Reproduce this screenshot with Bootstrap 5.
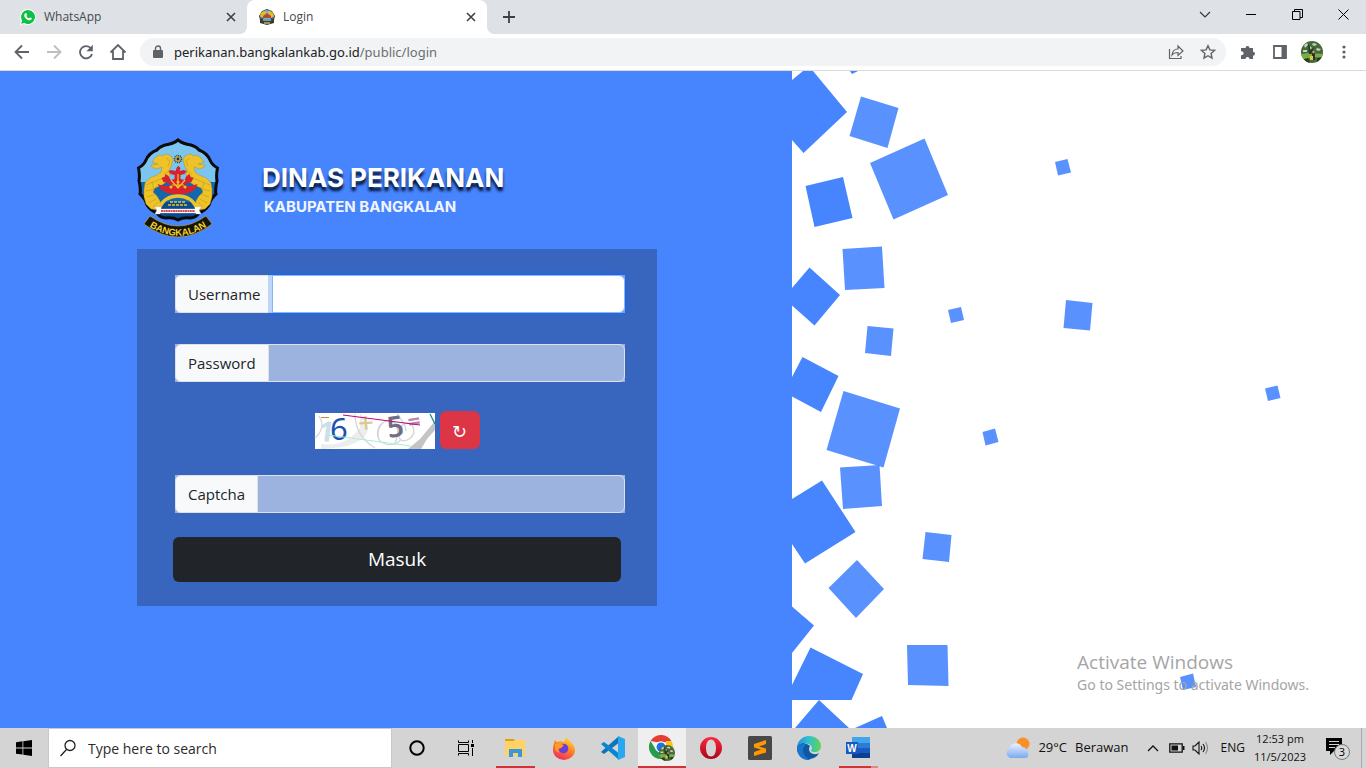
<!DOCTYPE html>
<html lang="id">
<head>
<meta charset="utf-8">
<meta name="viewport" content="width=device-width, initial-scale=1">
<title>Login</title>
<link href="https://cdn.jsdelivr.net/npm/bootstrap@5.3.0/dist/css/bootstrap.min.css" rel="stylesheet">
<style>
  :root { --sea: #4785ff; --strip: #dee1e6; --ink: #5f6368; }
  body { font-family: "Open Sans", "Noto Sans", sans-serif; font-size: 15px; }
  button { color: inherit; }
  .plain { border: 0; background: none; padding: 0; display: flex; align-items: center; justify-content: center; flex: none; }

  /* browser frame */
  .tab-strip { height: 34px; background: var(--strip); font-size: 12px; color: #45494d; }
  .tab-item { width: 240px; padding: 0 8px 0 12px; gap: 8px; color: inherit; }
  .tab-idle { width: 247px; padding-left: 20px; }
  .tab-open { background: #fff; border-radius: 8px 8px 0 0; position: relative; }
  .tab-open::before, .tab-open::after { content: ""; position: absolute; bottom: 0; width: 8px; height: 8px; }
  .tab-open::before { left: -8px; background: radial-gradient(circle at 0 0, transparent 8px, #fff 8px); }
  .tab-open::after { right: -8px; background: radial-gradient(circle at 100% 0, transparent 8px, #fff 8px); }
  .tab-x { width: 16px; height: 16px; }
  .tab-new { width: 28px; }
  .win-btn { width: 46px; height: 29px; }
  .tool-bar { height: 37px; background: #fff; border-bottom: 1px solid #dadada; padding: 0 6px; color: var(--ink); }
  .tool-btn { width: 32px; height: 32px; }
  .address { height: 28px; border-radius: 14px; background: #f1f3f4; margin: 0 6px; padding: 0 2px 0 12px; font: 13px/20px "Noto Sans", sans-serif; }
  .address a { margin-left: 10px; color: #202124; text-decoration: none; }
  .address a span { color: #6b6f74; }

  /* login page */
  .login-side { width: 58%; background: var(--sea); padding: 67px 135px 0 137px; }
  .brand { gap: 43px; height: 111px; }
  .brand-name { font: 700 26px/32px Inter, sans-serif; text-shadow: 0 4px 3px #00102f; margin: 0; }
  .brand-area { font: 700 15px/20px Inter, sans-serif; margin: 3px 0 0 2px; color: #f1f5ff; }
  .login-box { background: #3865be; padding: 26px 36px 24px; }
  .field { background: rgba(255,255,255,.5); width: auto; margin: 0 -4px 0 2px; --bs-border-radius: 6px; }
  .field .input-group-text, .field .form-control { font-size: 15px; height: 38px; border-color: #dee2e6; }
  .field .input-group-text { background: #f8f9fa; color: #212529; }
  .field .form-control { background: transparent; }
  .field .form-control.active-field { background: #fff; border-color: #86b7fe; box-shadow: 0 0 0 4px rgba(13,110,253,.25); z-index: 5; }
  .field-gap { margin-bottom: 31px; }
  .captcha-row { gap: 5px; margin: 29px 0 26px; }
  .captcha-row svg { overflow: visible; }
  .reload { width: 40px; height: 38px; padding: 4px 0 0; font: 18px/20px "DejaVu Sans", sans-serif; }
  .enter { height: 45px; font-size: 19px; background: #212529; color: #fff; border-radius: 6px; padding: 0; }
  .watermark { position: absolute; right: 57px; bottom: 33px; color: #a5a5a5; white-space: nowrap; }
  .watermark .big { font-size: 19px; line-height: 26px; }
  .watermark .tiny { font: 14px/20px "Noto Sans", sans-serif; }

  /* taskbar */
  .task-bar { height: 40px; background: #d4d4d4; color: #111; font-size: 13px; }
  .start-btn { width: 48px; height: 40px; }
  .search-box { width: 344px; background: #fff; border: 1px solid #c8c8c8; padding: 0 10px; gap: 11px; margin-right: 1px; }
  .search-box input { border: 0; outline: 0; background: none; padding: 0; min-width: 0; flex: 1; font-size: 14px; }
  .search-box input::placeholder { color: #2b2b2b; opacity: 1; }
  .task-btn { width: 48px; height: 40px; margin-right: 1px; position: relative; }
  .task-btn.running::after { content: ""; position: absolute; left: 5px; right: 4px; bottom: 0; height: 2px; background: #d13438; }
  .task-btn.current { background: #efefef; }
  .task-btn.current::after { left: 0; right: 0; }
  .task-btn.stacked::after { background: linear-gradient(90deg, #d13438 32px, #de8a8c 32px); }
  .tray-btn { width: 24px; height: 40px; }
  .lang { font-size: 12px; }
  .clock { width: 70px; font-size: 11px; line-height: 18px; }
  .note-btn { width: 46px; height: 40px; }
  .desk-edge { width: 5px; height: 40px; padding: 0; border: 0; border-left: 1px solid #a8a8a8; background: none; }
</style>
</head>
<body class="d-flex flex-column vh-100 overflow-hidden">

<svg width="0" height="0" class="position-absolute" aria-hidden="true">
  <defs>
    <path id="shield-line" d="M41 2Q46 6 54 7Q60 9 62 12Q70 15 73 22Q75 27 80.500 30Q79 37 80 43Q78 51 79 56Q74 60 72 67Q68 73 62 75Q59 80 53 80Q46 79 41 82Q36 79 29 80Q23 80 20 75Q14 73 10 67Q8 60 3 56Q4 51 2 43Q3 37 1.500 30Q7 27 9 22Q12 15 20 12Q22 9 28 7Q36 6 41 2Z"/>
    <clipPath id="shield"><use href="#shield-line"/></clipPath>
    <clipPath id="disc"><circle cx="11" cy="11" r="11"/></clipPath>
    <symbol id="emblem" viewBox="0 0 82 102">
      <g clip-path="url(#shield)">
        <path fill="#7cc5ee" d="M0 0h82v44H0z"/><path fill="#1268ac" d="M0 44h82v20H0z"/><path fill="#0a4c8b" d="M0 64h82v26H0z"/>
      </g>
      <use href="#shield-line" fill="none" stroke="#0b0b0b" stroke-width="3"/>
      <g id="beast" fill="#eec229" stroke="#a98512" stroke-width=".4">
        <path d="M19 19l4-2 2 1 4-2 5 2 2 4-2 7-2 3 1 5-2 6-6 4-7 3-2 4 4 4 3 5 1 6-3 3-7-1-5-5-2-7 0-8 1-6 5-5 7-3 4-3 1-5-6 2-4-2-1-2 7-1-6-2z"/>
        <path d="M9 47l10-4 7-3M9 53l9-2M10 59l9-3M12 65l7-4M16 69l5-5M29 20l4 3-2 5M27 36l6-3M25 40l6-2M15 44l2 8" fill="none"/>
      </g>
      <use href="#beast" transform="matrix(-1 0 0 1 82 0)"/>
      <circle cx="41" cy="21" r="3.500" fill="#cfb13c" stroke="#24476e" stroke-width="1.600" stroke-dasharray="1 .8"/><circle cx="41" cy="21" r="1.400" fill="#15345c"/>
      <path fill="#d7212e" d="M40 29l1.500-1 2 2-1 3 4-1 3 1-2 3-4 1v4l4 1 2-4 3-2 1 3 3 1-2 4-4 1-3 3h7l6-2-2 5-6 4-7 1h-9l-7-1-6-4-3-5 6 2h8l-4-3-4-1-2-4 3-1 1-3 3 2 2 4 4-1v-4l-4-1-2-3 3-1 4 1z"/>
      <path d="M41 36v14M34 42l7 8 7-8M35 47h12" fill="none" stroke="#eec229" stroke-width="1.200"/><circle cx="34" cy="49" r="1.600" fill="#eec229"/><circle cx="48" cy="49" r="1.600" fill="#eec229"/><circle cx="41" cy="44" r="1.600" fill="#eec229"/>
      <path d="M22 70Q28 58 41 58T60 70" fill="none" stroke="#eec229" stroke-width="3.500"/>
      <path d="M33 64h16M31 67h20" stroke="#eec229" stroke-width="1.300" stroke-dasharray="3 1"/>
      <path fill="#fff" stroke="#c6d1dc" stroke-width=".4" d="M18 69h6v2h34v-2h6l-2 3 2 4h-5v-1H23v1h-5l2-4z"/>
      <path d="M24 73h34" stroke="#df4b53" stroke-width="1.800" stroke-dasharray="2 .4"/>
      <path d="M13 78Q41 98 69 78L75 86Q41 112 7 86Z" fill="#17150b" stroke="#c7a72a" stroke-width=".6"/>
      <path id="ribbon" d="M9 86.500Q41 109 73 86.500" fill="none"/>
      <text font-family="Liberation Sans, sans-serif" font-weight="700" font-size="9.500" fill="#f1d12f" text-anchor="middle"><textPath href="#ribbon" startOffset="50%">BANGKALAN</textPath></text>
    </symbol>
    <symbol id="park" viewBox="0 0 22 22">
      <g clip-path="url(#disc)"><path fill="#47693a" d="M0 0h22v22H0z"/><path fill="#c3d4bd" d="M3 4l3-2 1 2-3 3zM12 2l4 1-2 2-3-1zM16 7l4 1-2 2-3-1zM2 9h4v2H2zM9 5l2 2-2 2z"/><path fill="#7cab48" d="M0 13l8-1 14 1v4l-9-1-13 3z"/><path fill="#263c20" d="M7 3l1.500 1 1 5 4-3-2 4-1 3H8l-.5-5zM0 19l7-2 2 5H0zM16 17l6-1v6h-6z"/><path fill="#28323f" d="M11 12h3v7h-3z"/><path fill="#dfc92f" d="M9 15h3v4H9z"/><circle cx="12.500" cy="11" r="1.200" fill="#c79b81"/></g>
    </symbol>
  </defs>
</svg>

<header>
  <nav class="tab-strip d-flex" aria-label="Tab">
    <div class="tab-item tab-idle d-flex align-items-center">
      <svg width="16" height="16" viewBox="0 0 16 16"><path fill="#fff" d="M8 0a8 8 0 11-4 15L0 16l1-4A8 8 0 018 0z"/><path fill="#0fc143" d="M8 1a7 7 0 11-3.600 13L1.200 14.800l.9-3.200A7 7 0 018 1z"/><path fill="#fff" d="M5.300 4.200c.5-.4 1-.2 1.200.3l.5 1.200c.1.500-.6.900-.6 1.200.5 1.100 1.400 1.900 2.500 2.300.4 0 .7-.9 1.200-.8l1.400.7c.4.300.2 1-.1 1.500-.8.900-2.200.9-3.400.4-1.800-.8-3-2.100-3.700-3.800-.3-1.200 0-2.200 1-3z"/></svg>
      <span class="flex-grow-1">WhatsApp</span>
      <button class="plain tab-x" aria-label="Tutup WhatsApp"><svg width="10" height="10" viewBox="0 0 10 10"><path d="M1 1l8 8M9 1L1 9" stroke="#3c4043" stroke-width="1.600"/></svg></button>
    </div>
    <div class="tab-item tab-open d-flex align-items-center">
      <svg width="16" height="16" viewBox="0 0 16 16"><path d="M8 0l5 2 3 5-1 4 0 3-7 2-7-2V11L0 7l3-5z" fill="#3d3b29"/><path d="M8 1l4 1 3 5-1 3H2L1 7l3-5z" fill="#6cb5d8"/><path d="M3 3l4-1v4L3 9 1 7l1-3zM13 3L9 2v4l4 3 2-2-1-3z" fill="#e3bd2c"/><path d="M4 7l4-3 4 3v2H4z" fill="#b24a36"/><path d="M2 8l3 2h6l3-2-1 4H3z" fill="#164d7c"/><path d="M4 11h8M5 14h6" stroke="#eee6b4"/></svg>
      <span class="flex-grow-1">Login</span>
      <button class="plain tab-x" aria-label="Tutup Login"><svg width="10" height="10" viewBox="0 0 10 10"><path d="M1 1l8 8M9 1L1 9" stroke="#3c4043" stroke-width="1.600"/></svg></button>
    </div>
    <button class="plain tab-new ms-2" aria-label="Tab baru"><svg width="12" height="12" viewBox="0 0 12 12"><path d="M6 0v12M0 6h12" stroke="#3c4043" stroke-width="1.800"/></svg></button>
    <div class="d-flex ms-auto text-black">
      <button class="plain win-btn" aria-label="Cari tab"><svg width="12" height="8" viewBox="0 0 12 8"><path d="M1 1l5 5 5-5" fill="none" stroke="#333" stroke-width="1.100"/></svg></button>
      <button class="plain win-btn" aria-label="Kecilkan"><svg width="10" height="2" viewBox="0 0 10 2"><path d="M0 .5h10" stroke="#000"/></svg></button>
      <button class="plain win-btn" aria-label="Pulihkan"><svg width="11" height="11" viewBox="0 0 11 11"><path d="M.5 2.500h7.500v8H.5zM2.500 2.500v-2h8v8H8" fill="none" stroke="#000"/></svg></button>
      <button class="plain win-btn" aria-label="Tutup"><svg width="11" height="11" viewBox="0 0 11 11"><path d="M.5.5l10 10M10.500.5l-10 10" stroke="#000"/></svg></button>
    </div>
  </nav>
  <div class="tool-bar d-flex align-items-center">
    <button class="plain tool-btn" aria-label="Kembali"><svg width="16" height="16" viewBox="0 0 16 16"><path d="M15 8H2M8 1.500L1.500 8 8 14.500" fill="none" stroke="#5f6368" stroke-width="1.800"/></svg></button>
    <button class="plain tool-btn" aria-label="Maju"><svg width="16" height="16" viewBox="0 0 16 16"><path d="M1 8h13M8 1.500L14.500 8 8 14.500" fill="none" stroke="#bcbec0" stroke-width="1.800"/></svg></button>
    <button class="plain tool-btn" aria-label="Muat ulang"><svg width="16" height="16" viewBox="0 0 16 16"><path d="M13 4.500A6.100 6.100 0 1014 10" fill="none" stroke="#5f6368" stroke-width="1.900"/><path d="M14.800.8v6.400H8.400z" fill="#5f6368"/></svg></button>
    <button class="plain tool-btn" aria-label="Beranda"><svg width="18" height="18" viewBox="0 0 18 18"><path d="M1.500 9.500L9 2l7.500 7.500M4 8v8h10V8" fill="none" stroke="#5f6368" stroke-width="1.800"/></svg></button>
    <div class="address d-flex align-items-center flex-grow-1">
      <svg width="12" height="14" viewBox="0 0 12 14"><path d="M2 5h8a1 1 0 011 1v6a1 1 0 01-1 1H2a1 1 0 01-1-1V6a1 1 0 011-1z" fill="#5f6368"/><path d="M3.500 6V3.500a2.500 2.500 0 015 0V6" fill="none" stroke="#5f6368" stroke-width="1.400"/></svg>
      <a href="#">perikanan.bangkalankab.go.id<span>/public/login</span></a>
      <button class="plain tool-btn ms-auto" aria-label="Bagikan"><svg width="16" height="16" viewBox="0 0 16 16" fill="none" stroke="#5f6368" stroke-width="1.200"><path d="M1.500 5v9.500H13V12"/><path d="M4 11c.5-4 2.500-6 6-6V2l5 5-5 4.500V8.500C7.500 8.500 5.500 9 4 11z"/></svg></button>
      <button class="plain tool-btn" aria-label="Tandai"><svg width="16" height="16" viewBox="0 0 16 16"><path d="M8 1.700l1.900 4.200 4.600.5-3.400 3.100.9 4.500-4-2.300L4 14l.9-4.500-3.400-3.100 4.600-.5z" fill="none" stroke="#5f6368" stroke-width="1.400"/></svg></button>
    </div>
    <button class="plain tool-btn" aria-label="Ekstensi"><svg width="16" height="16" viewBox="0 0 16 16"><path fill="#5f6368" d="M1 4h4.500a2 2 0 114 0H13v3.800a2 2 0 110 4V15H9.500a2 2 0 10-4 0H1v-4a1.900 1.900 0 100-3.500z"/></svg></button>
    <button class="plain tool-btn" aria-label="Panel samping"><svg width="14" height="14" viewBox="0 0 14 14"><path d="M1 1h12v12H1z" fill="none" stroke="#5f6368" stroke-width="1.800"/><path d="M8.500 1H13v12H8.500z" fill="#5f6368"/></svg></button>
    <button class="plain tool-btn" aria-label="Profil"><svg width="22" height="22"><use href="#park"/></svg></button>
    <button class="plain tool-btn" aria-label="Menu"><svg width="4" height="14" viewBox="0 0 4 14" fill="#5f6368"><circle cx="2" cy="2" r="1.600"/><circle cx="2" cy="7" r="1.600"/><circle cx="2" cy="12" r="1.600"/></svg></button>
  </div>
</header>

<main class="flex-grow-1 d-flex position-relative overflow-hidden bg-white">
  <section class="login-side">
    <div class="brand d-flex">
      <svg class="flex-shrink-0" width="82" height="102" role="img" aria-label="Lambang Bangkalan"><use href="#emblem"/></svg>
      <div class="text-white text-nowrap pt-4">
        <h1 class="brand-name">DINAS PERIKANAN</h1>
        <p class="brand-area">KABUPATEN BANGKALAN</p>
      </div>
    </div>
    <form class="login-box">
      <div class="input-group field field-gap">
        <label class="input-group-text" for="user">Username</label>
        <input class="form-control active-field" id="user" type="text">
      </div>
      <div class="input-group field">
        <label class="input-group-text" for="pass">Password</label>
        <input class="form-control" id="pass" type="password">
      </div>
      <div class="captcha-row d-flex justify-content-center align-items-end">
        <svg width="120" height="36" viewBox="0 0 120 36" role="img" aria-label="Captcha">
          <path fill="#fff" d="M0 0h120v36H0z"/>
          <path fill="#ededed" d="M45 0c9 10 11 17 3 25-10 8-22 10-42 11V31c20 3 31-6 39-16z"/>
          <g fill="none" stroke="#d6d6d6" stroke-width="1.300"><path d="M40 1c0 15 7 26 20 34M69 9c-8 4-9 17-1 21s16 0 18-4M64 27c-3-10 2-20 11-19s9 13 5 22M84 16c-2 12 4 14 10 10 8-5 5-15-1-16s-9 7-5 11M0 25c7-6 9-14 4-22M82 1c4 5 9 10 9 17"/></g>
          <path fill="#c4c4c4" d="M93 36l12-10 15-18v9l-8 9-6 10z"/>
          <g font-family="Noto Sans, sans-serif"><text x="3" y="28" font-size="28" fill="#c9dfea" font-weight="700" transform="rotate(8 8 20)">1</text><text x="15" y="27" font-size="31" fill="#1e50b4">6</text><text x="43" y="20" font-size="28" fill="#d9ca81" transform="rotate(-5 50 13)">+</text><text x="72" y="24" font-size="29" fill="#706c82" font-weight="600" transform="rotate(-8 79 14)">5</text><text x="93" y="16" font-size="22" fill="#b987ac" font-weight="700" transform="rotate(-10 100 9)">=</text></g>
          <path d="M6 4.500h8" stroke="#c28c48"/><path d="M28 2l77 10" stroke="#c4057f" stroke-width="1.200"/><path d="M13 22l83 11" stroke="#a3f5cf"/><path d="M115 1l5 10" stroke="#108a83" stroke-width="1.200"/>
        </svg>
        <button type="button" class="btn btn-danger reload" aria-label="Muat ulang captcha">↻</button>
      </div>
      <div class="input-group field">
        <label class="input-group-text" for="cap">Captcha</label>
        <input class="form-control" id="cap" type="text">
      </div>
      <button type="submit" class="btn enter w-100 mt-4">Masuk</button>
    </form>
  </section>
  <div class="flex-grow-1 overflow-hidden">
    <svg class="d-block w-100 h-100" viewBox="792 71 574 657" preserveAspectRatio="xMinYMin slice" aria-hidden="true">
      <g fill="#4785ff">
        <path d="M792 80l11-9h10l34 41-43.500 41L792 140zM850 71h8l-6 3zM805.500 186l37.500-9 9.500 41-38 9zM809.500 267.500L840 295l-25.500 30.500-22.500-20V288zM802.500 357l36 19-17.500 36-29-15.500V377zM822 480.500l33.500 51.500-50.500 31.500-13-19.500v-45zM792 606.500l22 19-22 27.500zM810.500 647.500L863 674l-11.500 26H792v-15zM819 700l30 28h-54zM882 716l5 12h-32z"/>
      </g>
      <g fill="#4785ff" fill-opacity=".9">
        <path d="M861 96.500l37.500 11.500-11 40-38-12z"/><path d="M924.500 138.500L948 195l-54.500 24.500L870 163z"/><path d="M842.500 249l39.500-2.500 2.500 41.500-39.500 2z"/><path d="M867.500 326l26 2.500L891 356l-26-3z"/><path d="M1055 162l12.500-3 3.500 13.500-13 3z"/><path d="M948 310l13-3 3 13-13 3z"/><path d="M1066 300l26.500 3-2.500 27.500-26.500-2.500z"/><path d="M843.500 391l56.500 17.500-16.500 59-57-17.500z"/><path d="M840 467.500l39.500-2.500 2.500 41-39 3z"/><path d="M982.500 432l12.500-3.500 3.500 13.500-13 3.500z"/><path d="M925.500 532l26 3-2.500 27-26.500-3z"/><path d="M857 560l27 29-28 29-27.500-30z"/><path d="M907 645h40.500l1 41-40.500-1z"/><path d="M1265 388.500l12.500-3 3 12.500-12.500 3z"/><path d="M1180 677l13-3.500 3 13.500-13 3z"/>
      </g>
    </svg>
  </div>
  <div class="watermark">
    <div class="big">Activate Windows</div>
    <div class="tiny">Go to Settings to activate Windows.</div>
  </div>
</main>

<footer class="task-bar d-flex align-items-center flex-shrink-0">
  <button class="plain start-btn" aria-label="Mulai"><svg width="16" height="16" viewBox="0 0 16 16"><path d="M0 2.200L6.500 1.300v6.200H0zM7.300 1.200L16 0v7.500H7.300zM0 8.400h6.500v6.200L0 13.700zM7.300 8.400H16V16l-8.700-1.200z"/></svg></button>
  <div class="search-box d-flex align-items-center align-self-stretch flex-shrink-0">
    <svg width="18" height="18" viewBox="0 0 18 18"><circle cx="11" cy="6.500" r="5" fill="none" stroke="#222" stroke-width="1.300"/><path d="M7.500 10.500L1.500 17" stroke="#222" stroke-width="1.300"/></svg>
    <input type="search" placeholder="Type here to search" aria-label="Type here to search">
  </div>
  <button class="plain task-btn" aria-label="Cortana"><svg width="16" height="16" viewBox="0 0 16 16"><circle cx="8" cy="8" r="6.700" fill="none" stroke="#000" stroke-width="2"/></svg></button>
  <button class="plain task-btn" aria-label="Tampilan tugas"><svg width="18" height="16" viewBox="0 0 18 16" fill="none" stroke="#000"><path d="M1.500.5v2h10v-2M1.500 15.500v-2h10v2M1.500 4.500h10v7h-10zM15.500 0v3M15.500 8v8"/><path d="M14 4h3v3h-3z" fill="#000" stroke="none"/></svg></button>
  <button class="plain task-btn running" aria-label="File Explorer"><svg width="22" height="20" viewBox="0 0 22 20"><path fill="#dda112" d="M1 1h9l1 2v4H1z"/><path fill="#ffd363" d="M1 3h9l2-1h9v16H1z"/><path fill="#3a96dd" d="M5 11h13v8h-4v-4H9v4H5z"/></svg></button>
  <button class="plain task-btn" aria-label="Firefox"><svg width="24" height="24" viewBox="0 0 24 24"><defs><linearGradient id="fx" x1=".8" y1="0" x2=".3" y2="1"><stop stop-color="#ffe63b"/><stop offset=".45" stop-color="#ff8a24"/><stop offset="1" stop-color="#f2275e"/></linearGradient></defs><path fill="url(#fx)" d="M2 7l1-3 2 2 4-1 3 1 2-5 4 4 4 5 1 4a11 10 0 01-22 0c0-3 .5-5 1-7z"/><circle cx="11.500" cy="12.500" r="4.800" fill="#6b3fd0"/><path fill="#ff9c29" d="M3 8c3-1 6 0 9 1l-3 3-3 1 1 4-4-3z"/></svg></button>
  <button class="plain task-btn" aria-label="Visual Studio Code"><svg width="24" height="24" viewBox="0 0 24 24"><path fill="#0b76be" d="M18 0L1 15l-1 1 3 2L19 6z"/><path fill="#0b86d1" d="M3 6L0 8l18 16 1-6z"/><path fill="#28a8ee" d="M17 0l7 3v18l-7 3z"/></svg></button>
  <button class="plain task-btn running current" aria-label="Chrome"><svg width="26" height="26" viewBox="0 0 26 26"><path fill="#e33e31" d="M1.600 6a12 12 0 0120.800 0L12 8z"/><path fill="#fbc415" d="M22.400 6A12 12 0 0112 24l5-9V6z"/><path fill="#279a4b" d="M12 24A12 12 0 011.600 6L7 15l5 2z"/><circle cx="12" cy="12" r="5.800" fill="#fff"/><circle cx="12" cy="12" r="4.500" fill="#1a73e8"/><svg x="10" y="10" width="16" height="16"><use href="#park"/></svg></svg></button>
  <button class="plain task-btn" aria-label="Opera"><svg width="24" height="24" viewBox="0 0 24 24"><defs><linearGradient id="op" x2="0" y2="1"><stop stop-color="#ff2740"/><stop offset="1" stop-color="#aa0618"/></linearGradient></defs><path fill="url(#op)" fill-rule="evenodd" d="M12 1a11 11 0 100 22 11 11 0 000-22zm0 2.500c3 0 5 3.500 5 8.500s-2 8.500-5 8.500S7 17 7 12s2-8.500 5-8.500z"/></svg></button>
  <button class="plain task-btn" aria-label="Sublime Text"><svg width="24" height="24" viewBox="0 0 24 24"><rect width="24" height="24" rx="1.500" fill="#484848"/><path fill="#ff9800" d="M6 8l12-4v4l-7 2.500 7 2v4L6 20v-4l7-2.500-7-2z"/></svg></button>
  <button class="plain task-btn" aria-label="Edge"><svg width="24" height="24" viewBox="0 0 24 24"><defs><linearGradient id="ed" x2="1"><stop stop-color="#1e91df"/><stop offset=".5" stop-color="#2fc2cf"/><stop offset="1" stop-color="#65d44c"/></linearGradient></defs><path fill="#0f59a4" d="M0 11a12 12 0 0020 9l2-3c-5 3-10 0-10-4 0-2 1-3 1-3C8 6 2 6 0 11z"/><path fill="#1875c9" d="M6 14c0 5 4 9 8 10C4 25-1 17 0 11c2-4 7-4 9-2-2 1-3 3-3 5z"/><path fill="url(#ed)" d="M0 11C1 4 6 0 12 0s12 4 12 10c0 4-3 6-6 6-2 0-4 0-4-2 2-1 1-5-3-6C7 6 2 7 0 11z"/></svg></button>
  <button class="plain task-btn running stacked" aria-label="Word"><svg width="24" height="24" viewBox="0 0 24 24"><path fill="#41a5ee" d="M6 1h18v6H6z"/><path fill="#2b7cd3" d="M6 7h18v5H6z"/><path fill="#185abd" d="M6 12h18v5H6z"/><path fill="#103f91" d="M6 17h18v5H6z"/><path fill="#185abd" d="M0 6h12v12H0z"/><text x="6" y="15.500" font-family="Liberation Sans, sans-serif" font-weight="700" font-size="10" fill="#fff" text-anchor="middle">W</text></svg></button>

  <div class="d-flex align-items-center ms-auto text-nowrap">
    <svg width="25" height="22" viewBox="0 0 25 22"><defs><linearGradient id="cl" x2="0" y2="1"><stop stop-color="#eaf2ff"/><stop offset="1" stop-color="#78aaf1"/></linearGradient></defs><circle cx="18" cy="7" r="6.500" fill="#f9902a"/><path fill="url(#cl)" d="M5 21a5 5 0 01-1-9 7 7 0 0113-2 6 6 0 016 6c1 2 0 5-3 5z"/></svg>
    <span class="mx-2">29°C</span><span class="me-2">Berawan</span>
    <button class="plain tray-btn ms-1" aria-label="Ikon tersembunyi"><svg width="12" height="8" viewBox="0 0 12 8"><path d="M1 7l5-5 5 5" fill="none" stroke="#111" stroke-width="1.300"/></svg></button>
    <button class="plain tray-btn" aria-label="Baterai"><svg width="16" height="10" viewBox="0 0 16 10"><path d="M.8.8h12.400v8.400H.8z" fill="none" stroke="#111" stroke-width="1.300"/><path d="M2.500 2.500H9v5H2.500zM14 3h1.500v4H14z" fill="#111"/></svg></button>
    <button class="plain tray-btn" aria-label="Suara"><svg width="17" height="14" viewBox="0 0 17 14" fill="none" stroke="#111" stroke-width="1.100"><path d="M1 5h2l4-4v12L3 9H1zM9 5q1.500 2 0 4M11 3q3 4 0 8"/><path d="M13.500 1q4 6 0 12" stroke="#888"/></svg></button>
    <span class="lang ms-2">ENG</span>
    <time class="clock text-center">12:53 pm<br>11/5/2023</time>
    <button class="plain note-btn" aria-label="Notifikasi"><svg width="26" height="26" viewBox="0 0 26 26"><path fill="#000" d="M1 3h16v13H9l-4 4v-4H1z"/><path d="M4 6.500h10M4 9.500h10M4 12.500h6" stroke="#d4d4d4"/><circle cx="17" cy="17" r="7.500" fill="#d9d9d9" stroke="#777"/><text x="17" y="21" text-anchor="middle" font-size="11">3</text></svg></button>
    <button class="desk-edge" aria-label="Tampilkan desktop"></button>
  </div>
</footer>
<script src="https://cdn.jsdelivr.net/npm/bootstrap@5.3.0/dist/js/bootstrap.bundle.min.js"></script>
</body>
</html>
